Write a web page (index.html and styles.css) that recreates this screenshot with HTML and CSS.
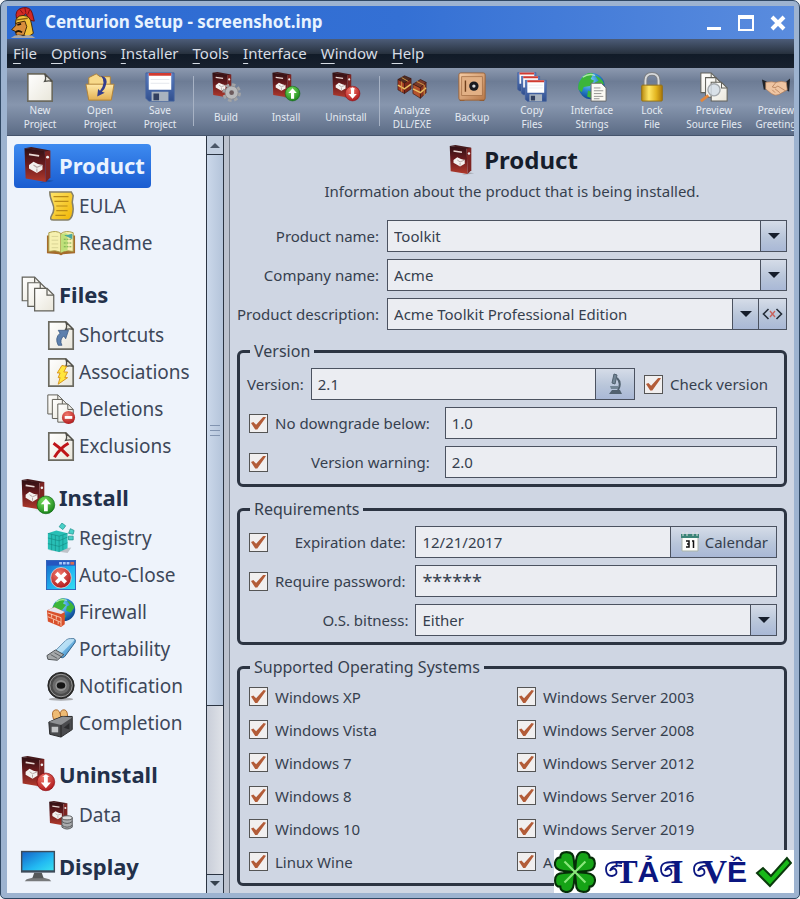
FILE: index.html
```html
<!DOCTYPE html>
<html lang="en">
<head>
<meta charset="utf-8">
<title>Centurion Setup - screenshot.inp</title>
<link rel="stylesheet" href="styles.css">
</head>
<body>
<svg class="sprite" aria-hidden="true">
  <defs>
    <linearGradient id="g-page" x1="0" y1="0" x2="1" y2="1"><stop offset="0" stop-color="#fff"/><stop offset="1" stop-color="#e9e6da"/></linearGradient>
    <linearGradient id="g-box" x1="0" y1="0" x2="0" y2="1"><stop offset="0" stop-color="#2e1014"/><stop offset=".5" stop-color="#6d1c1e"/><stop offset="1" stop-color="#b23a2c"/></linearGradient>
    <linearGradient id="g-gold" x1="0" y1="0" x2="1" y2="0"><stop offset="0" stop-color="#b98a10"/><stop offset=".35" stop-color="#ffe766"/><stop offset=".7" stop-color="#e3b51f"/><stop offset="1" stop-color="#a87508"/></linearGradient>
    <linearGradient id="g-folder" x1="0" y1="0" x2="0" y2="1"><stop offset="0" stop-color="#ffe9a8"/><stop offset="1" stop-color="#e3b052"/></linearGradient>
    <linearGradient id="g-scroll" x1="0" y1="0" x2="1" y2="1"><stop offset="0" stop-color="#ffe56a"/><stop offset="1" stop-color="#f0b400"/></linearGradient>
    <linearGradient id="g-floppy" x1="0" y1="0" x2="0" y2="1"><stop offset="0" stop-color="#5c80c4"/><stop offset="1" stop-color="#314f8e"/></linearGradient>
    <linearGradient id="g-screen" x1="0" y1="0" x2="1" y2="1"><stop offset="0" stop-color="#1565c8"/><stop offset=".6" stop-color="#22b8f2"/><stop offset="1" stop-color="#38e0f0"/></linearGradient>
    <linearGradient id="g-usb" x1="0" y1="0" x2="1" y2="1"><stop offset="0" stop-color="#b8e4fa"/><stop offset="1" stop-color="#2c86c8"/></linearGradient>
    <linearGradient id="g-safe" x1="0" y1="0" x2="1" y2="1"><stop offset="0" stop-color="#f6cda6"/><stop offset="1" stop-color="#b87848"/></linearGradient>
    <radialGradient id="g-globe" cx=".4" cy=".3" r=".75"><stop offset="0" stop-color="#8fe0ff"/><stop offset=".5" stop-color="#2a86d2"/><stop offset="1" stop-color="#0b3f86"/></radialGradient>
    <radialGradient id="g-green" cx=".4" cy=".3" r=".8"><stop offset="0" stop-color="#7be060"/><stop offset="1" stop-color="#0f7a12"/></radialGradient>
    <radialGradient id="g-red" cx=".4" cy=".3" r=".8"><stop offset="0" stop-color="#f27a6c"/><stop offset="1" stop-color="#a80f14"/></radialGradient>
  </defs>
  <symbol id="page" viewBox="0 0 32 32"><path d="M3 2h18l8 8v21H3z" fill="url(#g-page)" stroke="#6b6a60" stroke-width="1.8"/><path d="M21 2q2 5 0 8q5-1 8 0z" fill="#e6e4da" stroke="#4f4e48" stroke-width="1.4"/></symbol>
  <symbol id="pages" viewBox="0 0 32 32"><g stroke="#62615a" stroke-width="1.1"><path d="M2 1h11l5 5v16H2z" fill="url(#g-page)"/><path d="M7 6h11l5 5v16H7z" fill="url(#g-page)"/><path d="M13 11h11l6 6v14H13z" fill="url(#g-page)"/><path d="M24 11v6h6M18 6v5M13 1v5" fill="none"/></g></symbol>
  <symbol id="box" viewBox="0 0 32 32"><path d="M24 29l6 1-4 1-9 1z" fill="#000" opacity=".2"/><path d="M4 1l18 2 1 28L5 28z" fill="url(#g-box)"/><path d="M22 3l5 0 0 24-4 4z" fill="#7d2422"/><path d="M4 1l6-1 17 3-5 1z" fill="#45191b"/><path d="M8 6.500l9 1.300" stroke="#e9d8d4" stroke-width="1.600"/><path d="M8 16l4-3 4 2 4 1 0 4-5 3-7-4z" fill="#f3f1ef"/><path d="M12 16l3 2 5-2M15 19v3" stroke="#b7a7a5" fill="none"/><circle cx="24.500" cy="9" r="1.300" fill="#eee"/></symbol>
  <symbol id="up" viewBox="0 0 32 32"><circle cx="16" cy="16" r="14" fill="url(#g-green)" stroke="#0b6411"/><path d="M16 6l8 9h-5v11h-6V15H8z" fill="#fff"/></symbol>
  <symbol id="down" viewBox="0 0 32 32"><circle cx="16" cy="16" r="14" fill="url(#g-red)" stroke="#8c0a10"/><path d="M16 26l8-9h-5V8h3L16 4l-6 4h3v9H8z" fill="#fff"/></symbol>
  <symbol id="box-up" viewBox="0 0 32 32"><use href="#box" x="-2" width="28" height="28"/><use href="#up" x="14" y="14" width="18" height="18"/></symbol>
  <symbol id="box-down" viewBox="0 0 32 32"><use href="#box" x="-2" width="28" height="28"/><use href="#down" x="14" y="14" width="18" height="18"/></symbol>
  <symbol id="box-gear" viewBox="0 0 32 32"><use href="#box" x="-2" width="28" height="28"/><circle cx="22" cy="22" r="8" fill="none" stroke="#a3a4a6" stroke-width="4" stroke-dasharray="3.600 2.680"/><circle cx="22" cy="22" r="7" fill="#b9babc" stroke="#8c8d90"/><circle cx="22" cy="22" r="2.500" fill="#6c5a5c"/></symbol>
  <symbol id="box-data" viewBox="0 0 32 32"><use href="#box" width="27" height="29"/><g fill="#a9abad" stroke="#55575a"><path d="M17 19v10q5.500 4 11 0V19z"/><ellipse cx="22.500" cy="19" rx="5.500" ry="2.200" fill="#dcdddd"/><path d="M17 23q5.500 4 11 0M17 27q5.500 4 11 0" fill="none"/></g></symbol>
  <symbol id="folder" viewBox="0 0 32 32"><path d="M4 6l8-4 4 3h11v10H4z" fill="#f7d98a" stroke="#b08136"/><path d="M1 13h30l-3 17H4z" fill="url(#g-folder)" stroke="#b08136"/><path d="M17 4q9 2 5 11q-1 4-4 6l3 1-8 4 1-8 2 2q7-9 1-16z" fill="#343f8e"/></symbol>
  <symbol id="floppy" viewBox="0 0 32 32"><path d="M1 1h30v30H4l-3-3z" fill="url(#g-floppy)" stroke="#4362a0"/><path d="M4 1h24v18H4z" fill="#fff"/><path d="M4 1h24v3H4z" fill="#d23b30"/><path d="M7 21h18v10H7z" fill="#a9b3bf"/><path d="M9 23h6v7H9z" fill="#32405f"/><path d="M6 8h20M6 12h20" stroke="#e3e6ec"/></symbol>
  <symbol id="floppies" viewBox="0 0 32 32"><use href="#floppy" width="21" height="21"/><use href="#floppy" x="4" y="4" width="21" height="21"/><use href="#floppy" x="8" y="8" width="24" height="24"/></symbol>
  <symbol id="crates" viewBox="0 0 32 32"><g stroke="#3c150c" stroke-width=".7"><path d="M1 8l7-4 7 3-7 5z" fill="#4f2c22"/><path d="M1 8l7 4v11l-7-4z" fill="#a43a22"/><path d="M8 12l7-5v11l-7 5z" fill="#7a281a"/><path d="M17 13l8-5 6 3-6 6z" fill="#7b3a28"/><path d="M17 13l8 4v11l-8-5z" fill="#b5522c"/><path d="M25 17l6-6v11l-6 6z" fill="#8c3420"/></g><path d="M1 14l7 4 7-5M17 18l8 4 6-5" stroke="#e8bf62" stroke-width="1.600" fill="none"/><path d="M5 6l7 4M21 10l8 4v11M5 10v11" stroke="#d29c48" fill="none"/></symbol>
  <symbol id="safe" viewBox="0 0 32 32"><path d="M3 29h5v2H3zM24 29h5v2h-5z" fill="#7c4d2a"/><rect x="2" y="1" width="28" height="29" rx="2" fill="url(#g-safe)" stroke="#9a6238"/><rect x="5" y="5" width="22" height="20" fill="#e2b085" stroke="#a46f46" stroke-width=".8"/><circle cx="18" cy="15" r="5" fill="#191a1f"/><circle cx="18" cy="15" r="1.800" fill="#d3d6da"/><path d="M9 9v12" stroke="#70401c" stroke-width="1.500"/></symbol>
  <symbol id="globe" viewBox="0 0 32 32"><circle cx="16" cy="16" r="15" fill="url(#g-globe)"/><path d="M4 8q7-9 14-6l-3 6 4 2-5 6-7 1-2 6-4-3q-1-7 3-12zM20 4q7 2 10 9l-5 7-6-3 1-5 4-2zM12 21l7 3-3 6-5-2z" fill="#3cb53a"/><path d="M6 6q7-5 14-2" stroke="#d8ffd0" stroke-width="1.500" fill="none" opacity=".7"/></symbol>
  <symbol id="globe-page" viewBox="0 0 32 32"><use href="#globe" width="31" height="30"/><path d="M15 12h11l5 5v14H15z" fill="#fbfaf4" stroke="#666"/><path d="M18 17h7M18 20h10M18 23h8M18 26h10M18 28.500h6" stroke="#777" stroke-width=".8"/></symbol>
  <symbol id="lock" viewBox="0 0 32 32"><path d="M9 15V9q0-7 7-7t7 7v6" fill="none" stroke="#7d8186" stroke-width="4"/><path d="M9 15V9q0-7 7-7t7 7v6" fill="none" stroke="#d8dadc" stroke-width="2"/><rect x="5" y="14" width="22" height="17" rx="1" fill="url(#g-gold)" stroke="#947012"/></symbol>
  <symbol id="pages-find" viewBox="0 0 32 32"><use href="#pages" width="32" height="32"/><path d="M10 25l-8 6" stroke="#e2863c" stroke-width="3"/><circle cx="16" cy="19" r="6.500" fill="#d3dde6" fill-opacity=".85" stroke="#a4a9ad" stroke-width="1.500"/></symbol>
  <symbol id="hands" viewBox="0 0 32 32"><path d="M1 8l5 2 1 8-4 1zM31 7l-4 3 0 9 3 2z" fill="#202328"/><path d="M5 11q7-1 11 0q6-2 11 0l1 8-9 5q-4 2-8-1l-6-5z" fill="#efc5a2" stroke="#b07a54" stroke-width=".7"/><path d="M16 11l-4 5q3 2 6-1l8 5M12 19l3 3M15 18l5 4" stroke="#b07a54" stroke-width=".8" fill="none"/></symbol>
  <symbol id="scroll" viewBox="0 0 32 32"><path d="M4 1h23l2 4-1 7q2 7 0 14-2 5-5 5H8q-5 0-2-5 4-6 1-13T4 1z" fill="url(#g-scroll)" stroke="#85806a" stroke-width="1.600"/><path d="M8 6h16M9 11h15M11 16h12M11 21h12M10 26h11" stroke="#b98a16" stroke-width="1.300"/></symbol>
  <symbol id="book" viewBox="0 0 32 32"><path d="M1 8h30v19l-13 1q-2 2-4 0L1 27z" fill="#a56b2c"/><path d="M3 5q8-3 13 1v20q-6-3-13-1zM29 5q-8-3-13 1v20q6-3 13-1z" fill="#f6f0b0" stroke="#a89a45"/><path d="M6 9h7M6 13h7M6 17h7M6 21h7" stroke="#d8d294" /><path d="M16 7q4-2 7-1v18q-4 0-7 2z" fill="#bfe07a"/><path d="M20 8h8M19 12h8M19 16h9M19 20h9" stroke="#6ca845" stroke-dasharray="2 1"/><path d="M20 8l8-2v6z" fill="#4ba8a0"/></symbol>
  <symbol id="page-link" viewBox="0 0 32 32"><use href="#page" width="32" height="32"/><path d="M13 27q-4-8 2-13l-2-3 11 0-3 9-2-3q-5 4-2 10z" fill="#5d80ad" stroke="#3a5880" stroke-width=".8"/></symbol>
  <symbol id="page-bolt" viewBox="0 0 32 32"><use href="#page" width="32" height="32"/><path d="M17 9l5 1-3 6 4 0-3 6 3 0-10 7 2-7-2 0 2-5-3 0z" fill="#ffe63c" stroke="#d8921a"/></symbol>
  <symbol id="pages-minus" viewBox="0 0 32 32"><use href="#pages" width="31" height="31"/><circle cx="24" cy="25" r="7" fill="url(#g-red)"/><path d="M20 25h8" stroke="#fff" stroke-width="3"/></symbol>
  <symbol id="page-x" viewBox="0 0 32 32"><use href="#page" width="32" height="32"/><path d="M8 13q9 6 16 14M24 13Q15 18 9 28" stroke="#bf1417" stroke-width="3.200" fill="none"/></symbol>
  <symbol id="cubes" viewBox="0 0 32 32"><path d="M3 29l20 3 4-6z" fill="#000" opacity=".2"/><path d="M2 11l9-3 12 3v16l-9 4-12-3z" fill="#28bfb6"/><path d="M2 11l12 3v17M14 14l9-3M2 16l12 3 9-4M2 22l12 3 9-4M6 12v17M10 13v17M18 13v16" stroke="#12867f" stroke-width=".6" fill="none"/><g fill="#49d0c8" stroke="#168b85" stroke-width=".7"><path d="M17 0l4 3-3 4-4-3zM26 6l4 2-1 4-5-1zM24 14l5 0 0 4-5 0z"/></g></symbol>
  <symbol id="window-close" viewBox="0 0 32 32"><rect x=".5" y=".5" width="31" height="31" fill="url(#g-screen)" stroke="#2f62b8"/><path d="M1 1h30v5H1z" fill="#2456c0"/><path d="M14 3.500h11" stroke="#a8c8f8" stroke-width="2.500" stroke-dasharray="3 1"/><path d="M26 2h4v3h-4z" fill="#d86b52"/><circle cx="16" cy="19" r="11" fill="url(#g-red)" stroke="#e8d8dc" stroke-width=".8"/><path d="M11 14l10 10M21 14L11 24" stroke="#fff" stroke-width="4"/></symbol>
  <symbol id="firewall" viewBox="0 0 32 32"><use href="#globe" x="6" width="26" height="27"/><path d="M1 14l8-3 11 5v13l-4 3-14-6z" fill="#d9502c"/><path d="M1 14l8-3 11 5-4 2z" fill="#e6e4ee"/><path d="M2 17l14 5v9M2 21l14 6M6 18v4M11 20v4M8 24v4M13 26v3" stroke="#ffe2c8" stroke-width=".8" fill="none"/></symbol>
  <symbol id="usb" viewBox="0 0 32 32"><path d="M9 19L21 7q2-2 5-2h4q2 1 1 4L20 24q-2 2-5 1z" fill="url(#g-usb)" stroke="#2a5c86"/><path d="M21 7q2-2 5-2h4q1 1-1 3L17 20l-8-1z" fill="#d6f1fd" opacity=".65"/><path d="M1 23l9-6 9 5-7 6-10-1z" fill="#a5a8aa" stroke="#4c5053"/><path d="M5 22l7 4M9 20l7 4" stroke="#5b5f62"/></symbol>
  <symbol id="speaker" viewBox="0 0 32 32"><ellipse cx="16" cy="30" rx="13" ry="1.800" fill="#666" opacity=".5"/><circle cx="16" cy="15.500" r="14" fill="#2c2c2c" stroke="#222"/><circle cx="16" cy="15.500" r="12" fill="#4a4a4a" stroke="#b5b5b5" stroke-width=".8"/><circle cx="16" cy="15.500" r="9" fill="#6a6a6a"/><circle cx="16" cy="15.500" r="6" fill="#909090"/><ellipse cx="16" cy="15.500" rx="4.500" ry="3.500" fill="#151515"/></symbol>
  <symbol id="toaster" viewBox="0 0 32 32"><path d="M8 12q-3-9 2-10 5-1 6 9zM16 11q-2-8 2-9 5-1 5 7z" fill="#eebb74" stroke="#a8682c"/><path d="M3 15l14-6 11 0v14l-12 8-12-3z" fill="#4a4b4e" stroke="#252628"/><path d="M3 15l13 3 12-8-10-1z" fill="#8f9194"/><path d="M16 18v13" stroke="#222"/><path d="M6 20h7v6H6z" fill="#c2c4c6"/><path d="M19 21l6-5v7z" fill="#2b2c2e"/></symbol>
  <symbol id="monitor" viewBox="0 0 38 34"><path d="M7 31q12-4 24 0l2 2H5z" fill="#77797b"/><path d="M15 24h8l2 6H13z" fill="#55585a"/><rect x="1" y="1" width="36" height="23" fill="#3e4b5a"/><rect x="2.500" y="2.500" width="33" height="19" fill="url(#g-screen)"/></symbol>
  <symbol id="centurion" viewBox="0 0 28 34"><path d="M7 12Q5 3 13 1q9-2 11 6l2 8-5-1-4-7-7 6z" fill="#d22a25" stroke="#6e0d10"/><path d="M11 3l3 4M16 1l1 5M21 3l-2 5" stroke="#7b1012"/><path d="M6 18q0-9 8-9t9 9l2 10-6 4-8-4 6-8z" fill="#f2c33c" stroke="#3c2606"/><path d="M7 17l9-2 2 6-3 9-8 0-1-4-4-2 4-4z" fill="#d88d3c" stroke="#3c2606"/><path d="M8 19l4-1M6 27q3-3 7 0" stroke="#231402" stroke-width="1.800" fill="none"/><path d="M1 33q6-5 13-2 8-3 13 2z" fill="#aaa7a6"/><path d="M6 14l13-2" stroke="#8a5c0c" stroke-width="1.500"/></symbol>
  <symbol id="arrow-down" viewBox="0 0 14 8"><path d="M1 1h12L7 7z" fill="#151d2b"/></symbol>
  <symbol id="swash" viewBox="0 0 18 20"><path d="M18 3Q2 0 2 9q0 7 6 7 6-1 4-6-2-3-5 0M18 6Q8 4 6 11" fill="none" stroke="#0b1680" stroke-width="1.800"/></symbol>
</svg>

<div class="window">
  <header class="titlebar">
    <svg class="app-icon" aria-hidden="true"><use href="#centurion"/></svg>
    <span class="title">Centurion Setup - screenshot.inp</span>
    <div class="controls">
      <button type="button" aria-label="Minimize"><svg viewBox="0 0 16 16"><path d="M1 12h14v3H1z" fill="#fff"/></svg></button>
      <button type="button" aria-label="Maximize"><svg viewBox="0 0 16 16"><path d="M0 0h16v16H0zM2 4v10h12V4z" fill="#fff" fill-rule="evenodd"/></svg></button>
      <button type="button" aria-label="Close"><svg viewBox="0 0 16 16"><path d="M2 2l12 12M14 2L2 14" stroke="#fff" stroke-width="4"/></svg></button>
    </div>
  </header>

  <nav class="menubar" aria-label="Menu">
    <button type="button"><u>F</u>ile</button>
    <button type="button"><u>O</u>ptions</button>
    <button type="button"><u>I</u>nstaller</button>
    <button type="button"><u>T</u>ools</button>
    <button type="button"><u>I</u>nterface</button>
    <button type="button"><u>W</u>indow</button>
    <button type="button"><u>H</u>elp</button>
  </nav>

  <div class="toolbar" role="toolbar" aria-label="Project">
    <button type="button"><svg><use href="#page"/></svg><span>New<br>Project</span></button>
    <button type="button"><svg><use href="#folder"/></svg><span>Open<br>Project</span></button>
    <button type="button"><svg><use href="#floppy"/></svg><span>Save<br>Project</span></button>
    <i class="sep"></i>
    <button type="button"><svg><use href="#box-gear"/></svg><span>Build</span></button>
    <button type="button"><svg><use href="#box-up"/></svg><span>Install</span></button>
    <button type="button"><svg><use href="#box-down"/></svg><span>Uninstall</span></button>
    <i class="sep"></i>
    <button type="button"><svg><use href="#crates"/></svg><span>Analyze<br>DLL/EXE</span></button>
    <button type="button"><svg><use href="#safe"/></svg><span>Backup</span></button>
    <button type="button"><svg><use href="#floppies"/></svg><span>Copy<br>Files</span></button>
    <button type="button"><svg><use href="#globe-page"/></svg><span>Interface<br>Strings</span></button>
    <button type="button"><svg><use href="#lock"/></svg><span>Lock<br>File</span></button>
    <button type="button" class="wide"><svg><use href="#pages-find"/></svg><span>Preview<br>Source Files</span></button>
    <button type="button"><svg><use href="#hands"/></svg><span>Preview<br>Greeting</span></button>
  </div>

  <div class="workspace">
    <nav class="tree" aria-label="Sections">
      <a href="#product" class="group selected"><svg><use href="#box"/></svg>Product</a>
      <a href="#eula"><svg><use href="#scroll"/></svg>EULA</a>
      <a href="#readme"><svg><use href="#book"/></svg>Readme</a>
      <a href="#files" class="group"><svg><use href="#pages"/></svg>Files</a>
      <a href="#shortcuts"><svg><use href="#page-link"/></svg>Shortcuts</a>
      <a href="#associations"><svg><use href="#page-bolt"/></svg>Associations</a>
      <a href="#deletions"><svg><use href="#pages-minus"/></svg>Deletions</a>
      <a href="#exclusions"><svg><use href="#page-x"/></svg>Exclusions</a>
      <a href="#install" class="group"><svg><use href="#box-up"/></svg>Install</a>
      <a href="#registry"><svg><use href="#cubes"/></svg>Registry</a>
      <a href="#auto-close"><svg><use href="#window-close"/></svg>Auto-Close</a>
      <a href="#firewall-page"><svg><use href="#firewall"/></svg>Firewall</a>
      <a href="#portability"><svg><use href="#usb"/></svg>Portability</a>
      <a href="#notification"><svg><use href="#speaker"/></svg>Notification</a>
      <a href="#completion"><svg><use href="#toaster"/></svg>Completion</a>
      <a href="#uninstall" class="group"><svg><use href="#box-down"/></svg>Uninstall</a>
      <a href="#data"><svg><use href="#box-data"/></svg>Data</a>
      <a href="#display" class="group"><svg><use href="#monitor"/></svg>Display</a>
    </nav>
    <div class="scrollbar">
      <button type="button" aria-label="Scroll up"><svg viewBox="0 0 10 6"><path d="M0 6h10L5 1z" fill="#4c5869"/></svg></button>
      <div class="thumb"><i></i></div>
      <div class="track"></div>
      <button type="button" aria-label="Scroll down"><svg viewBox="0 0 10 6"><path d="M0 0h10L5 5z" fill="#36424f"/></svg></button>
    </div>
    <div class="splitter"></div>

    <main class="panel" id="product">
      <h1><svg aria-hidden="true"><use href="#box"/></svg>Product</h1>
      <p class="lead">Information about the product that is being installed.</p>

      <div class="fields">
        <label for="name">Product name:</label>
        <div class="combo"><select id="name"><option>Toolkit</option></select><span class="drop"><svg><use href="#arrow-down"/></svg></span></div>
        <label for="company">Company name:</label>
        <div class="combo"><select id="company"><option>Acme</option></select><span class="drop"><svg><use href="#arrow-down"/></svg></span></div>
        <label for="description">Product description:</label>
        <div class="joined">
          <div class="combo"><select id="description"><option>Acme Toolkit Professional Edition</option></select><span class="drop"><svg><use href="#arrow-down"/></svg></span></div>
          <button type="button" class="push constant" aria-label="Insert constant"><svg viewBox="0 0 20 12"><path d="M6 1L1 6l5 5M14 1l5 5-5 5" stroke="#242c38" stroke-width="1.600" fill="none"/><path d="M7.500 3l5 6M12.500 3l-5 6" stroke="#c9605a" stroke-width="1.300"/></svg></button>
        </div>
      </div>

      <fieldset>
        <legend>Version</legend>
        <div class="version-row">
          <label for="version">Version:</label>
          <div class="joined">
            <input type="text" id="version" value="2.1">
            <button type="button" class="push inspect" aria-label="Inspect version"><svg viewBox="0 0 16 22"><path d="M7 1l3 1-2 9-3-1z" fill="#718494" stroke="#51616f"/><path d="M10 5q5 5 1 12" stroke="#51616f" stroke-width="2" fill="none"/><path d="M3 13h8v3H4z" fill="#718494"/><path d="M5 17h8l2 4H2z" fill="#51616f"/></svg></button>
          </div>
          <label class="tick"><input type="checkbox" checked>Check version</label>
        </div>
        <div class="option-grid roomy">
          <input type="checkbox" id="min-on" checked aria-labelledby="min-label"><label for="min" id="min-label">No downgrade below:</label><input type="text" id="min" value="1.0">
          <input type="checkbox" id="warn-on" checked aria-labelledby="warn-label"><label for="warn" id="warn-label">Version warning:</label><input type="text" id="warn" value="2.0">
        </div>
      </fieldset>

      <fieldset>
        <legend>Requirements</legend>
        <div class="option-grid">
          <input type="checkbox" id="exp-on" checked aria-labelledby="exp-label"><label for="exp" id="exp-label">Expiration date:</label>
          <div class="joined">
            <input type="text" id="exp" value="12/21/2017">
            <button type="button" class="push"><svg class="cal" viewBox="0 0 18 20"><path d="M1 3h16v16H1z" fill="#fdfdfa" stroke="#a9b3a9"/><path d="M0 2h18v4H0z" fill="#3c8478"/><path d="M2 0v4M6 0v4M12 0v4M16 0v4" stroke="#dfe5e2"/><path d="M5 9h3v6H5M6 12h2M11 9h1.500v7" stroke="#111" stroke-width="1.500" fill="none"/></svg>Calendar</button>
          </div>
          <input type="checkbox" id="pw-on" checked aria-labelledby="pw-label"><label for="pw" id="pw-label">Require password:</label><input type="text" class="secret" id="pw" value="******">
          <label for="bits" class="bits">O.S. bitness:</label>
          <div class="combo"><select id="bits"><option>Either</option></select><span class="drop"><svg><use href="#arrow-down"/></svg></span></div>
        </div>
      </fieldset>

      <fieldset class="systems">
        <legend>Supported Operating Systems</legend>
        <div class="system-list">
          <label class="tick"><input type="checkbox" checked>Windows XP</label>
          <label class="tick"><input type="checkbox" checked>Windows Vista</label>
          <label class="tick"><input type="checkbox" checked>Windows 7</label>
          <label class="tick"><input type="checkbox" checked>Windows 8</label>
          <label class="tick"><input type="checkbox" checked>Windows 10</label>
          <label class="tick"><input type="checkbox" checked>Linux Wine</label>
          <label class="tick"><input type="checkbox" checked>Windows Server 2003</label>
          <label class="tick"><input type="checkbox" checked>Windows Server 2008</label>
          <label class="tick"><input type="checkbox" checked>Windows Server 2012</label>
          <label class="tick"><input type="checkbox" checked>Windows Server 2016</label>
          <label class="tick"><input type="checkbox" checked>Windows Server 2019</label>
          <label class="tick"><input type="checkbox" checked>A</label>
        </div>
      </fieldset>
    </main>
  </div>

  <a href="#download" class="download">
    <svg class="clover" viewBox="0 0 40 40" aria-hidden="true"><g fill="#16a316" stroke="#062d08" stroke-width="2"><path id="leaf" d="M20 20L9 19Q0 18 1 11Q2 6 6 6Q6 1 12 1Q19 1 19 9z"/><use href="#leaf" transform="rotate(90 20 20)"/><use href="#leaf" transform="rotate(180 20 20)"/><use href="#leaf" transform="rotate(270 20 20)"/></g><path d="M10 10l20 20M30 10L10 30" stroke="#8be87c" stroke-width="2"/></svg>
    <span class="word"><svg aria-hidden="true"><use href="#swash"/></svg><b class="serif">T</b><b>Ả</b><svg aria-hidden="true"><use href="#swash"/></svg><b class="serif">I</b></span>
    <span class="word"><svg aria-hidden="true"><use href="#swash"/></svg><b class="serif">V</b><b>Ề</b></span>
    <svg class="done" viewBox="0 0 38 32" aria-hidden="true"><path d="M2 17l6-5 8 8L32 2l4 5-21 23z" fill="#18b818" stroke="#0a3a0c" stroke-width="2"/></svg>
  </a>
</div>
</body>
</html>
```
FILE: styles.css
```css
* { box-sizing: border-box; }

:root {
  --ink: #363f4e;
  --edge: #4b5260;
  --key: linear-gradient(#d5dce8, #b9c6da 55%, #a9b8d6);
}

body {
  margin: 0;
  background: #f4f6f8;
  color: var(--ink);
  font: 15px/24px "Noto Sans", "Open Sans", sans-serif;
}

button, input, select { font: inherit; color: inherit; margin: 0; }
button { border: 0; background: none; padding: 0; }

.sprite { position: absolute; width: 0; height: 0; }

.window {
  position: relative;
  display: flex;
  flex-direction: column;
  height: 100vh;
  overflow: hidden;
  border: 1px solid #2f4763;
  border-radius: 7px 7px 5px 5px;
  padding: 5px 5px 5px 6px;
  background: #9db3d0;
}

/* Title bar */
.titlebar {
  flex: none;
  display: flex;
  align-items: center;
  height: 33px;
  padding-right: 8px;
  background: linear-gradient(90deg, #2c6ad2, #3470d4 50%, #5a8cde);
  color: #e8f3ff;
}
.app-icon { width: 28px; height: 32px; margin-left: 2px; }
.title { margin-left: 8px; padding-bottom: 2px; font-size: 17px; font-weight: 700; }
.controls { display: flex; gap: 16px; margin-left: auto; }
.controls button { display: flex; }
.controls svg { width: 16px; height: 16px; }

/* Menu */
.menubar {
  flex: none;
  display: flex;
  gap: 14px;
  height: 29px;
  padding: 0 6px 2px;
  background: linear-gradient(#4c5c78, #28323f 50%, #111b28 52%, #18212e);
  color: #d6dce4;
}
.menubar u { text-underline-offset: 4px; text-decoration-thickness: 1px; }

/* Toolbar */
.toolbar {
  flex: none;
  display: flex;
  height: 68px;
  padding: 4px 0 4px 3px;
  overflow: hidden;
  border-bottom: 1px solid #45546c;
  background: linear-gradient(#8c99af, #6d7c95 20%, #8796ae 55%, #5b6b85);
  color: #e4eaf2;
  font-size: 10px;
  line-height: 14px;
}
.toolbar button {
  flex: none;
  display: flex;
  flex-direction: column;
  align-items: center;
  width: 60px;
}
.toolbar .wide { width: 64px; }
.toolbar svg { flex: none; width: 30px; height: 30px; }
.toolbar span { margin: auto; white-space: nowrap; text-align: center; }
.sep { flex: none; width: 1px; height: 50px; margin: 4px 2px 0 3px; background: #a7b2c4; }

/* Workspace */
.workspace { flex: 1; display: flex; min-height: 0; }

.tree {
  flex: none;
  display: flex;
  flex-direction: column;
  align-items: flex-start;
  width: 199px;
  padding: 8px 0 0 7px;
  overflow: hidden;
  background: #eef3fb;
}
.tree a {
  flex: none;
  display: flex;
  align-items: center;
  gap: 3px;
  height: 37px;
  margin-left: 32px;
  padding-bottom: 3px;
  color: #3d4759;
  font-size: 19px;
  text-decoration: none;
}
.tree a svg { width: 30px; height: 30px; }
.tree .group + a { margin-top: 1px; }
.tree .group {
  height: 44px;
  margin: 10px 0 0;
  padding: 0 6px 3px;
  border-radius: 4px;
  color: #22304a;
  font-size: 22px;
  font-weight: 700;
}
.tree .group svg { width: 36px; height: 36px; }
.tree .selected { margin-top: 0; background: linear-gradient(#3e8bf0, #1a5cd0); color: #eaf3ff; }

.scrollbar {
  flex: none;
  display: flex;
  flex-direction: column;
  width: 18px;
  border: solid #2b3442;
  border-width: 0 1px;
  background: #d3d9e3;
}
.scrollbar button { display: grid; place-items: center; height: 18px; background: #c3cfe0; }
.scrollbar svg { width: 10px; height: 6px; }
.thumb {
  flex: 550;
  display: grid;
  place-items: center;
  border: solid #2b3442;
  border-width: 1px 0;
  background: linear-gradient(90deg, #cbd8ea, #b4c4da);
}
.thumb i { width: 10px; height: 11px; background: repeating-linear-gradient(#8294b0 0 1px, transparent 1px 5px); }
.track { flex: 168; border-bottom: 1px solid #2b3442; background: linear-gradient(90deg, #c9ced9, #dfe2e8); }
.splitter { flex: none; width: 6px; border-right: 1px solid #737b88; background: #bcc2ce; }

/* Panel */
.panel {
  flex: 1;
  min-width: 0;
  padding: 8px 7px 0;
  overflow: hidden;
  background: #cfd6e3;
}
h1 {
  display: flex;
  justify-content: center;
  align-items: center;
  gap: 8px;
  margin: 0;
  color: #161d2b;
  font-size: 24px;
  line-height: 32px;
}
h1 svg { width: 30px; height: 30px; }
.lead { margin: 3px 0 17px; text-align: center; }

.fields { display: grid; grid-template-columns: auto 1fr; align-items: center; gap: 7px 8px; margin-bottom: 9px; }
.fields > label { text-align: right; }

input[type="text"], select {
  width: 100%;
  min-width: 0;
  height: 32px;
  padding: 0 6px;
  border: 1px solid var(--edge);
  border-radius: 0;
  background: #ebedf2;
  appearance: none;
  outline: 0;
}
input[type="text"].secret { font-size: 18px; }
.combo { display: grid; flex: 1; min-width: 0; }
.combo > * { grid-area: 1 / 1; }
.drop, .push { display: flex; align-items: center; justify-content: center; border: 1px solid var(--edge); background: var(--key); }
.drop { justify-self: end; width: 27px; pointer-events: none; }
.drop svg { width: 14px; height: 8px; }
.joined { display: flex; min-width: 0; }
.push { flex: none; height: 32px; margin-left: -1px; padding: 0 8px 0 10px; gap: 6px; }
.constant { width: 29px; padding: 0; }
.constant svg { width: 21px; height: 12px; }
.inspect { width: 40px; padding: 0; }
.inspect svg { width: 16px; height: 22px; }
.cal { width: 18px; height: 20px; }

input[type="checkbox"] {
  flex: none;
  display: grid;
  place-items: center;
  width: 19px;
  height: 19px;
  margin: 0 2px;
  border: 1px solid #555;
  background: #f1efef;
  appearance: none;
}
input[type="checkbox"]:checked::before {
  content: "";
  width: 15px;
  height: 13px;
  background: #b35c38;
  clip-path: polygon(0 50%, 16% 42%, 34% 64%, 84% 0, 100% 6%, 42% 100%, 28% 100%);
}

fieldset {
  min-width: 0;
  margin: 0 0 10px;
  padding: 5px 7px 6px;
  border: 3px solid #2c3442;
  border-radius: 6px;
}
legend { margin-left: 3px; padding: 0 4px; font-size: 16px; }

.version-row { display: grid; grid-template-columns: auto 1fr auto; gap: 7px; margin-bottom: 7px; }
.version-row > label { line-height: 32px; }
.tick { display: flex; align-items: center; gap: 5px; }
.version-row .tick { padding-right: 9px; }

.option-grid { display: grid; grid-template-columns: auto auto 1fr; align-items: center; gap: 7px 5px; }
.option-grid > label { text-align: right; padding-right: 5px; }
.option-grid > .bits { grid-column: span 2; padding-right: 2px; }
.roomy > label { padding-right: 10px; }

.systems { padding: 1px 7px 5px; }
.system-list { display: grid; grid-template-rows: repeat(6, 33px); grid-auto-flow: column; grid-auto-columns: 1fr; column-gap: 6px; }

/* Download banner */
.download {
  position: absolute;
  right: 5px;
  bottom: 5px;
  display: flex;
  align-items: center;
  width: 240px;
  height: 43px;
  background: #fff;
  color: #0b1680;
  text-decoration: none;
}
.clover { width: 42px; height: 42px; margin-right: 8px; }
.word { display: flex; align-items: center; margin-right: 8px; font: 700 30px/36px "Liberation Sans", sans-serif; }
.serif { font-family: "Liberation Serif", serif; font-size: 34px; }
.word svg { width: 18px; height: 20px; margin: 0 -7px 4px 0; }
.done { width: 38px; height: 32px; margin-left: auto; margin-right: 1px; }
```
